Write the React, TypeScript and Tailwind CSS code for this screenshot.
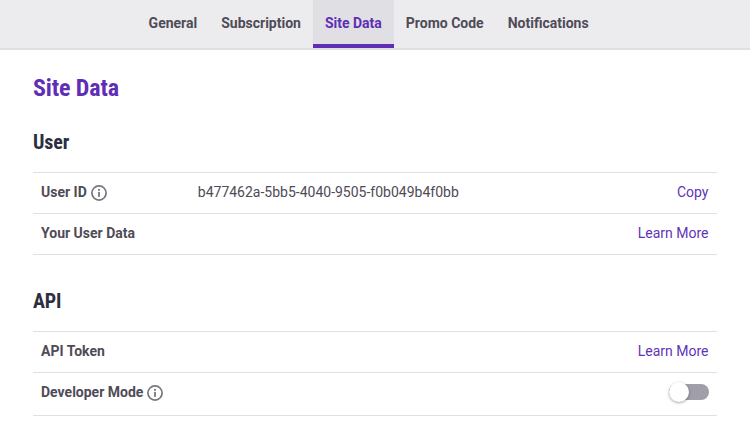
import { ReactNode } from "react";

const tabs = ["General", "Subscription", "Site Data", "Promo Code", "Notifications"];

function InfoIcon() {
  return (
    <svg width="16" height="16" viewBox="0 0 16 16" fill="none" className="ml-1 mt-[2px] shrink-0">
      <circle cx="8" cy="8" r="7.1" stroke="#77747f" strokeWidth="1.7" />
      <circle cx="8" cy="4.8" r="1.1" fill="#77747f" />
      <rect x="7.1" y="6.9" width="1.8" height="5" fill="#77747f" />
    </svg>
  );
}

function Row({ children, right, className }: { children: ReactNode; right?: ReactNode; className: string }) {
  return (
    <div className={"flex items-center justify-between border-b border-[#e0dfe5] px-2 " + className}>
      <div className="flex items-center">{children}</div>
      {right}
    </div>
  );
}

function LinkText({ label }: { label: string }) {
  return <a className="mr-[0.5px] text-sm text-[#5f33b8]">{label}</a>;
}

export default function App() {
  return (
    <div className="h-[430px] w-[750px] overflow-hidden bg-white font-['Roboto',sans-serif] text-[#4f4b57]">
      <div className="flex h-[50px] border-b-2 border-[#e0dfe3] bg-[#ecebee] pl-[137px]">
        {tabs.map((t) => (
          <div
            key={t}
            className={
              t === "Site Data"
                ? "flex h-[48px] items-center border-b-4 border-[#5f2eb5] bg-[#e0dfe3] pl-[11.6px] pr-[12.4px] pt-[2px] text-sm font-bold text-[#5f2eb5]"
                : "flex h-[48px] items-center border-b-4 border-transparent pl-[11.6px] pr-[12.4px] pt-[2px] text-sm font-bold"
            }
          >
            {t}
          </div>
        ))}
      </div>
      <div className="pl-[33px] pr-[33px]">
        <h1 className="mt-[23px] text-2xl leading-[30px] font-bold tracking-[-0.1px] text-[#5f2eb5] [font-stretch:75%]">Site Data</h1>
        <h2 className="mt-[26px] text-xl leading-[26px] font-bold tracking-[-0.1px] text-[#2b2f3f] [font-stretch:75%]">User</h2>
        <div className="mt-[17px] border-t border-[#e0dfe5]">
          <Row className="h-[41px] pb-[2px]" right={<LinkText label="Copy" />}>
            <span className="text-sm font-bold">User ID</span>
            <InfoIcon />
            <span className="ml-[91px] text-sm">b477462a-5bb5-4040-9505-f0b049b4f0bb</span>
          </Row>
          <Row className="h-[41px] pb-[2px]" right={<LinkText label="Learn More" />}>
            <span className="text-sm font-bold">Your User Data</span>
          </Row>
        </div>
        <h2 className="mt-[33px] text-xl leading-[26px] font-bold tracking-[-0.1px] text-[#2b2f3f] [font-stretch:75%]">API</h2>
        <div className="mt-[17px] border-t border-[#e0dfe5]">
          <Row className="h-[41px] pb-[2px]" right={<LinkText label="Learn More" />}>
            <span className="text-sm font-bold">API Token</span>
          </Row>
          <Row
            className="h-[43px] pb-[4px]"
            right={
              <div className="relative h-4 w-[40px] rounded-full bg-[#a09ea9]">
                <div className="absolute top-[-2px] left-0 h-5 w-5 rounded-full bg-white shadow-[0_1px_3px_rgba(0,0,0,0.35)]" />
              </div>
            }
          >
            <span className="text-sm font-bold">Developer Mode</span>
            <InfoIcon />
          </Row>
        </div>
      </div>
    </div>
  );
}
